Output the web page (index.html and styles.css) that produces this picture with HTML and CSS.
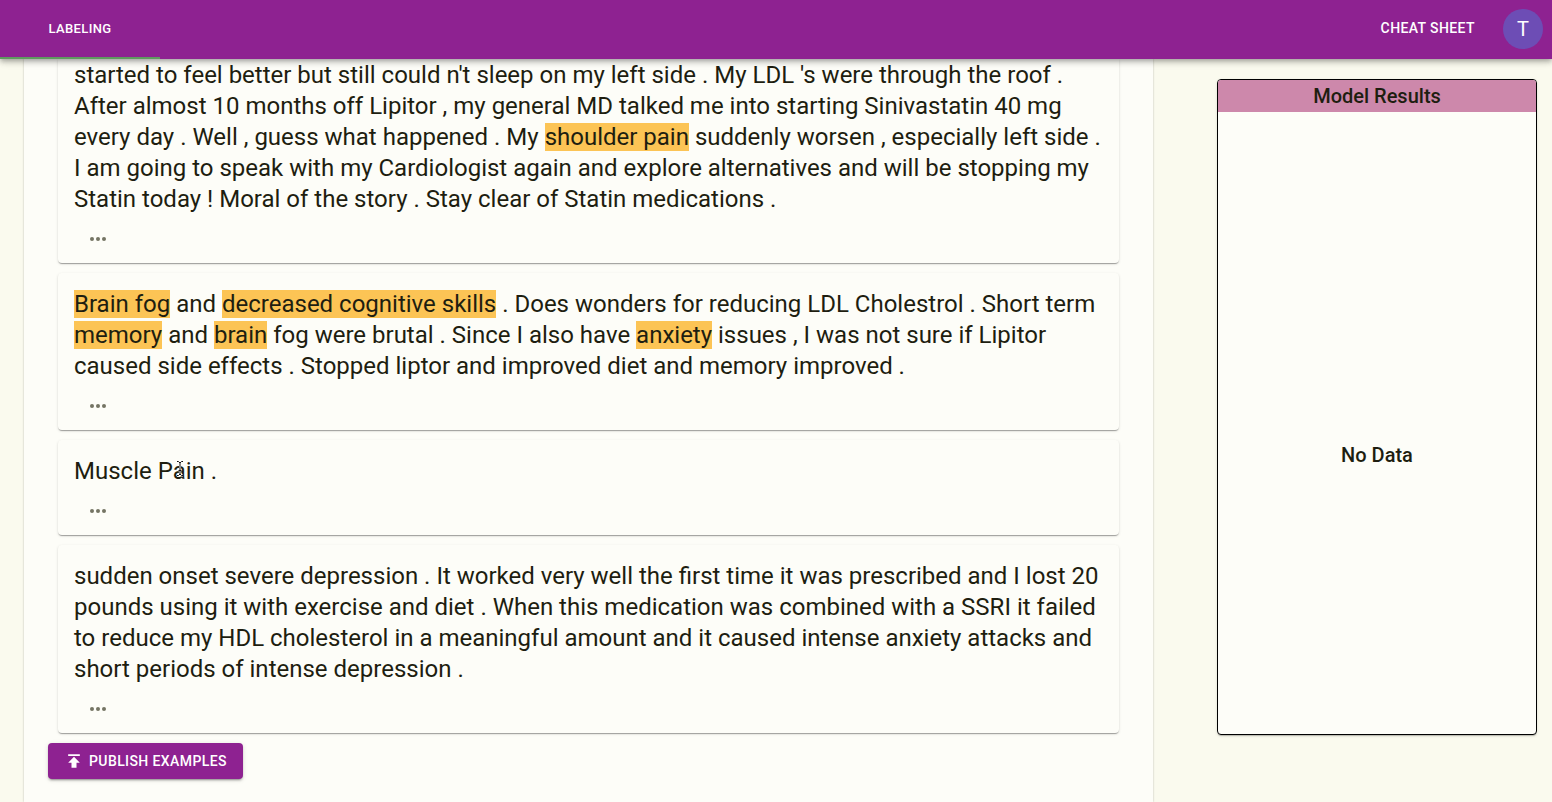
FILE: index.html
```html
<!DOCTYPE html>
<html lang="en">
<head>
<meta charset="utf-8">
<title>Labeling</title>
<link rel="stylesheet" href="styles.css">
</head>
<body>
<header class="app-bar">
  <nav class="tabs"><button class="tab" type="button">LABELING</button></nav>
  <div class="app-actions">
    <button class="text-button" type="button">CHEAT SHEET</button>
    <button class="avatar" type="button">T</button>
  </div>
</header>
<div class="page">
  <main class="workspace">
    <div class="cards">
      <article class="card card-scrolled">
        <p class="card-text">started to feel better but still could n't sleep on my left side . My LDL 's were through the roof . After almost 10 months off Lipitor , my general MD talked me into starting Sinivastatin 40 mg every day . Well , guess what happened . My <mark>shoulder pain</mark> suddenly worsen , especially left side . I am going to speak with my Cardiologist again and explore alternatives and will be stopping my Statin today ! Moral of the story . Stay clear of Statin medications .</p>
        <div class="card-actions"><button class="more" type="button" aria-label="More"><svg viewBox="0 0 18 6" width="18" height="6"><circle cx="3" cy="3" r="2"/><circle cx="9" cy="3" r="2"/><circle cx="15" cy="3" r="2"/></svg></button></div>
      </article>
      <article class="card">
        <p class="card-text"><mark>Brain fog</mark> and <mark>decreased cognitive skills</mark> . Does wonders for reducing LDL Cholestrol . Short term <mark>memory</mark> and <mark>brain</mark> fog were brutal . Since I also have <mark>anxiety</mark> issues , I was not sure if Lipitor caused side effects . Stopped liptor and improved diet and memory improved .</p>
        <div class="card-actions"><button class="more" type="button" aria-label="More"><svg viewBox="0 0 18 6" width="18" height="6"><circle cx="3" cy="3" r="2"/><circle cx="9" cy="3" r="2"/><circle cx="15" cy="3" r="2"/></svg></button></div>
      </article>
      <article class="card">
        <p class="card-text">Muscle Pain .</p>
        <svg class="pointer" viewBox="0 0 8 17" width="8" height="17"><path class="pointer-halo" d="M1 1.5h1.5L4 3l1.5-1.5H7M4 3v11M1 15.5h1.5L4 14l1.5 1.5H7M2.5 10.5h3"/><path d="M1 1.5h1.5L4 3l1.5-1.5H7M4 3v11M1 15.5h1.5L4 14l1.5 1.5H7M2.5 10.5h3"/></svg>
        <div class="card-actions"><button class="more" type="button" aria-label="More"><svg viewBox="0 0 18 6" width="18" height="6"><circle cx="3" cy="3" r="2"/><circle cx="9" cy="3" r="2"/><circle cx="15" cy="3" r="2"/></svg></button></div>
      </article>
      <article class="card">
        <p class="card-text">sudden onset severe depression . It worked very well the first time it was prescribed and I lost 20 pounds using it with exercise and diet . When this medication was combined with a SSRI it failed to reduce my HDL cholesterol in a meaningful amount and it caused intense anxiety attacks and short periods of intense depression .</p>
        <div class="card-actions"><button class="more" type="button" aria-label="More"><svg viewBox="0 0 18 6" width="18" height="6"><circle cx="3" cy="3" r="2"/><circle cx="9" cy="3" r="2"/><circle cx="15" cy="3" r="2"/></svg></button></div>
      </article>
    </div>
    <button class="publish" type="button"><svg viewBox="0 0 24 24" width="20" height="20"><path d="M5 4v2h14V4H5zm0 10h4v6h6v-6h4l-7-7-7 7z"/></svg>PUBLISH EXAMPLES</button>
  </main>
  <aside class="side">
    <section class="results">
      <h2 class="results-title">Model Results</h2>
      <p class="results-empty">No Data</p>
    </section>
  </aside>
</div>
</body>
</html>
```
FILE: styles.css
```css
* { box-sizing: border-box; }

body {
  margin: 0;
  height: 100vh;
  display: flex;
  flex-direction: column;
  overflow: hidden;
  background: #fafaee;
  color: #1e1e10;
  font-family: Roboto, "Liberation Sans", sans-serif;
}

button {
  border: 0;
  margin: 0;
  padding: 0;
  background: none;
  color: inherit;
  font: 500 14px/24px Roboto, "Liberation Sans", sans-serif;
  letter-spacing: 0.02857em;
  cursor: pointer;
}

.app-bar {
  flex: none;
  z-index: 1;
  display: flex;
  justify-content: space-between;
  height: 59px;
  background: #8e2291;
  color: #fff;
  box-shadow: 0 2px 4px -1px rgba(0,0,0,.2), 0 4px 5px rgba(0,0,0,.14), 0 1px 10px rgba(0,0,0,.12);
}

.tabs { display: flex; }

.tab {
  width: 160px;
  font-size: 13px;
  border-bottom: 2px solid #5f9a5f;
}

.app-actions {
  display: flex;
  align-items: center;
  gap: 28px;
  padding: 0 9px 2px 0;
}

.text-button { padding-bottom: 2px; }

.avatar {
  width: 40px;
  height: 40px;
  border-radius: 50%;
  background: #6d4db5;
  font-size: 20px;
  font-weight: 400;
  letter-spacing: 0;
}

.page {
  flex: 1;
  min-height: 0;
  display: flex;
}

.workspace {
  flex: 1;
  margin-left: 24px;
  padding: 0 24px;
  background: #fdfdf8;
  box-shadow: 0 0 2px rgba(0,0,0,.25);
}

.cards {
  display: flex;
  flex-direction: column;
  gap: 10px;
  padding: 0 10px 10px;
}

.card {
  position: relative;
  padding: 16px 16px 0;
  border-radius: 4px;
  background: #fdfdf8;
  box-shadow: 0 2px 1px -1px rgba(0,0,0,.2), 0 1px 1px rgba(0,0,0,.14), 0 1px 3px rgba(0,0,0,.12);
}

.card-scrolled {
  padding-top: 1px;
  border-radius: 0 0 4px 4px;
}

.card-text {
  margin: 0;
  font-size: 24px;
  line-height: 31px;
}

mark {
  background: #fcc455;
  color: inherit;
}

.card-actions {
  display: flex;
  align-items: center;
  height: 48px;
  padding-left: 9px;
}

.more {
  display: flex;
  padding: 6px;
  fill: #747464;
}

.pointer {
  position: absolute;
  left: 118px;
  top: 20px;
  fill: none;
  stroke: #111;
}

.pointer-halo {
  stroke: #fff;
  stroke-width: 2;
}

.publish {
  display: flex;
  align-items: center;
  gap: 5px;
  padding: 6px 16px;
  border-radius: 4px;
  background: #8e2291;
  color: #fff;
  fill: #fff;
  box-shadow: 0 3px 1px -2px rgba(0,0,0,.2), 0 2px 2px rgba(0,0,0,.14), 0 1px 5px rgba(0,0,0,.12);
}

.side {
  flex: none;
  display: flex;
  padding: 20px 15px 67px 64px;
}

.results {
  width: 320px;
  display: flex;
  flex-direction: column;
  overflow: hidden;
  border: 1px solid #000;
  border-radius: 4px;
  background: #fdfdf8;
  text-align: center;
  box-shadow: 0 2px 1px -1px rgba(0,0,0,.2), 0 1px 3px rgba(0,0,0,.12);
}

.results-title,
.results-empty {
  margin: 0;
  font-size: 20px;
  font-weight: 500;
  line-height: 32px;
}

.results-title { background: #cd88ab; }

.results-empty {
  flex: 1;
  display: flex;
  align-items: center;
  justify-content: center;
  padding-top: 64px;
}
```
